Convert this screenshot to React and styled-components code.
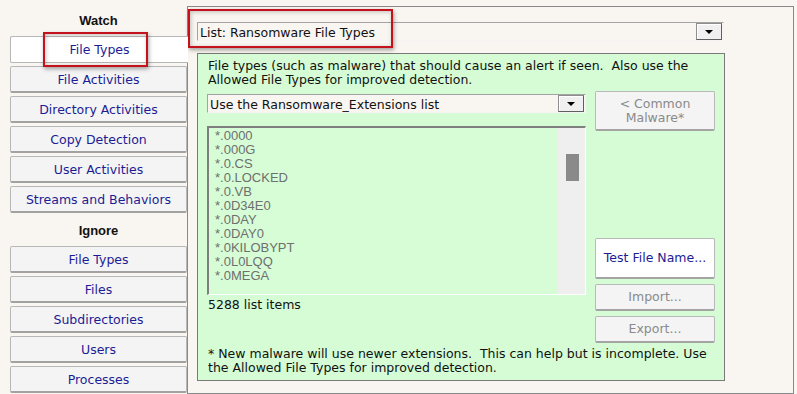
import React from 'react'
import styled, { createGlobalStyle, css } from 'styled-components'

const GlobalStyle = createGlobalStyle`
  html, body {
    margin:0;
    padding:0;
    background:#f9f5f0;
  }
  body {
    font-family:'DejaVu Sans', Verdana, sans-serif;
    font-size:12.5px;
    color:#111;
  }
`

const watchItems = ['File Types', 'File Activities', 'Directory Activities', 'Copy Detection', 'User Activities', 'Streams and Behaviors']
const ignoreItems = ['File Types', 'Files', 'Subdirectories', 'Users', 'Processes']
const extensions = ['*.0000', '*.000G', '*.0.CS', '*.0.LOCKED', '*.0.VB', '*.0D34E0', '*.0DAY', '*.0DAY0', '*.0KILOBYPT', '*.0L0LQQ', '*.0MEGA']

const Page = styled.div`
  display:flex;
  width:797px;
  height:394px;
  overflow:hidden;
  background:#f9f5f0;
`

const Sidebar = styled.nav`
  flex-shrink:0;
  width:177px;
  padding-left:10px;
  display:flex;
  flex-direction:column;
  gap:3px;
`

const GroupTitle = styled.div`
  height:${p => p.$h}px;
  box-sizing:border-box;
  display:flex;
  align-items:flex-end;
  justify-content:center;
  padding-bottom:5px;
  font:bold 13px/14px 'Liberation Sans', Arial, sans-serif;
  color:#111;
`

const NavButton = styled.button`
  position:relative;
  height:27px;
  box-sizing:border-box;
  padding:0;
  border:1px solid #b7b7b7;
  border-bottom:2px solid #a2a2a2;
  border-radius:2px;
  background:#f4f4f4;
  color:#1c1c94;
  font:12.5px 'DejaVu Sans', Verdana, sans-serif;
  text-align:center;
  cursor:pointer;
  ${p => p.$active && css`
    z-index:1;
    margin-right:-1px;
    background:#fff;
    border-right:none;
    border-bottom:1px solid #b7b7b7;
    border-radius:2px 0 0 2px;
  `}
`

const Highlight = styled.span`
  position:absolute;
  left:${p => p.$x}px;
  top:${p => p.$y}px;
  width:${p => p.$w}px;
  height:${p => p.$h}px;
  box-sizing:border-box;
  border:2px solid #c3121b;
  box-shadow:1px 2px 4px rgba(0,0,0,0.35), inset 1px 1px 4px rgba(0,0,0,0.22);
  pointer-events:none;
`

const Main = styled.main`
  flex:1;
  height:388px;
  margin:6px 3px 0 0;
  box-sizing:border-box;
  border:1px solid #8a8a8a;
  padding:15px 0 0 9px;
`

const SelectBox = styled.div`
  position:relative;
  display:flex;
  align-items:center;
  width:${p => p.$w}px;
  height:19px;
  box-sizing:border-box;
  border:1px solid;
  border-color:#a3a3a3 #f4f4f4 #f4f4f4 #a3a3a3;
  background:#f9f5f0;
  padding:0 1px 0 2px;
`

const SelectText = styled.span`
  flex:1;
  line-height:17px;
  padding-top:1px;
  white-space:nowrap;
`

const DropButton = styled.span`
  display:flex;
  align-items:center;
  justify-content:center;
  width:26px;
  height:17px;
  box-sizing:border-box;
  border:1px solid;
  border-color:#8e8e8e #5f5f5f #5f5f5f #8e8e8e;
  background:#f0f0f0;
  box-shadow:inset 1px 1px 0 #fff;
`

const Arrow = styled.span`
  width:0;
  height:0;
  border-left:4px solid transparent;
  border-right:4px solid transparent;
  border-top:4px solid #000;
`

const Panel = styled.section`
  width:528px;
  height:328px;
  margin-top:12px;
  box-sizing:border-box;
  border:1px solid #7a7a7a;
  background:#d5fcd5;
  padding:5px 9px 0 9px;
`

const Text = styled.p`
  margin:${p => p.$mt || 0}px 0 0;
  padding-left:1px;
  line-height:14px;
  white-space:pre;
`

const Row = styled.div`
  display:flex;
  gap:8px;
  margin-top:4px;
`

const LeftCol = styled.div`
  width:380px;
  padding-top:3px;
`

const ListBox = styled.div`
  display:flex;
  width:379px;
  height:169px;
  margin-top:13px;
  box-sizing:border-box;
  border-top:2px solid #7f7f7f;
  border-left:2px solid #7f7f7f;
  border-right:1px solid #fff;
  border-bottom:1px solid #fff;
  background:#d6fdd6;
`

const Items = styled.ul`
  flex:1;
  margin:0;
  padding:1px 0 0 6px;
  list-style:none;
  font:13px/14px 'Liberation Sans', Arial, sans-serif;
  color:#6f6f6f;
`

const ScrollTrack = styled.div`
  width:27px;
  padding-top:26px;
  box-sizing:border-box;
  background:#efefef;
`

const Thumb = styled.div`
  width:13px;
  height:27px;
  margin-left:8px;
  background:#8a8a8a;
`

const RightCol = styled.div`
  width:120px;
  display:flex;
  flex-direction:column;
`

const ActionButton = styled.button`
  height:${p => p.$h}px;
  margin-top:${p => p.$mt || 0}px;
  box-sizing:border-box;
  padding:0;
  border:1px solid #b9b9b9;
  border-bottom:2px solid #a4a4a4;
  border-radius:2px;
  background:${p => (p.$primary ? '#fff' : '#f4f4f4')};
  color:${p => (p.$primary ? '#1c1c94' : '#8a8a8a')};
  font:12.5px/14px 'DejaVu Sans', Verdana, sans-serif;
  text-align:center;
`

export default function App() {
  return (
    <>
      <GlobalStyle />
      <Page>
        <Sidebar>
          <GroupTitle $h={33}>Watch</GroupTitle>
          {watchItems.map((item, i) => (
            <NavButton key={'w' + item} $active={i === 0}>
              {item}
              {i === 0 && <Highlight $x={32} $y={-5} $w={105} $h={35} />}
            </NavButton>
          ))}
          <GroupTitle $h={27}>Ignore</GroupTitle>
          {ignoreItems.map(item => (
            <NavButton key={'i' + item}>{item}</NavButton>
          ))}
        </Sidebar>
        <Main>
          <SelectBox $w={527}>
            <SelectText>List: Ransomware File Types</SelectText>
            <DropButton><Arrow /></DropButton>
            <Highlight $x={-10} $y={-14} $w={205} $h={39} />
          </SelectBox>
          <Panel>
            <Text>{'File types (such as malware) that should cause an alert if seen.  Also use the\nAllowed File Types for improved detection.'}</Text>
            <Row>
              <LeftCol>
                <SelectBox $w={379}>
                  <SelectText>Use the Ransomware_Extensions list</SelectText>
                  <DropButton><Arrow /></DropButton>
                </SelectBox>
                <ListBox>
                  <Items>
                    {extensions.map(ext => <li key={ext}>{ext}</li>)}
                  </Items>
                  <ScrollTrack><Thumb /></ScrollTrack>
                </ListBox>
                <Text $mt={3}>5288 list items</Text>
              </LeftCol>
              <RightCol>
                <ActionButton $h={40}>{'< Common'}<br />Malware*</ActionButton>
                <ActionButton $h={41} $mt={107} $primary>Test File Name...</ActionButton>
                <ActionButton $h={27} $mt={5}>Import...</ActionButton>
                <ActionButton $h={27} $mt={5}>Export...</ActionButton>
              </RightCol>
            </Row>
            <Text $mt={4}>{'* New malware will use newer extensions.  This can help but is incomplete. Use\nthe Allowed File Types for improved detection.'}</Text>
          </Panel>
        </Main>
      </Page>
    </>
  )
}
